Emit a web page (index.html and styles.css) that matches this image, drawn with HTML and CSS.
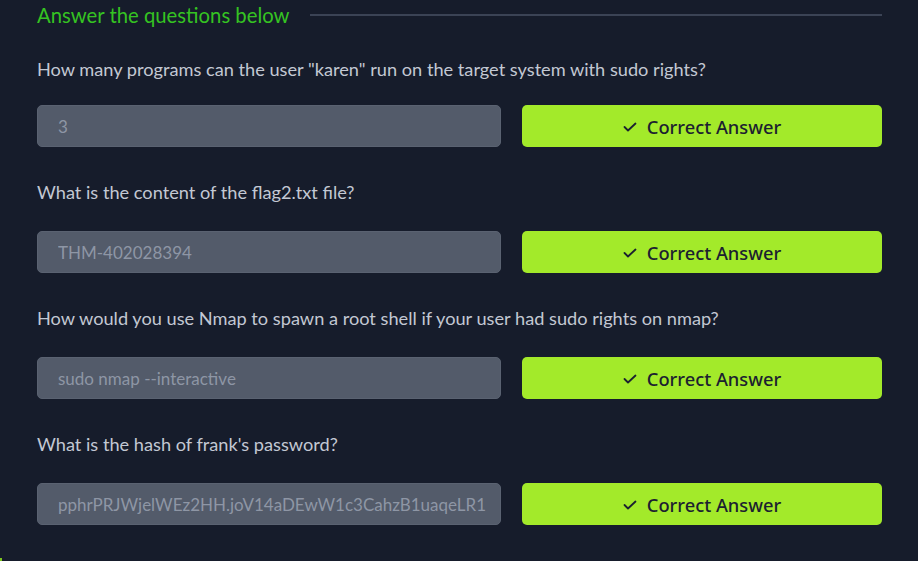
FILE: index.html
```html
<!DOCTYPE html>
<html>
<head>
<meta charset="utf-8">
<link rel="stylesheet" href="styles.css">
</head>
<body>
<div class="page">
  <div class="heading">
    <h2 class="heading-title">Answer the questions below</h2>
    <div class="heading-rule"></div>
  </div>

  <div class="question">
    <p class="question-text">How many programs can the user "karen" run on the target system with sudo rights?</p>
    <div class="answer-row">
      <div class="answer-input"><div class="answer-value">3</div></div>
      <button class="answer-btn"><svg class="check" viewBox="0 0 14 10" width="14" height="10"><polyline points="1.5,5 5,8.5 12.5,1.5" fill="none" stroke="currentColor" stroke-width="1.8" stroke-linecap="round" stroke-linejoin="round"/></svg>Correct Answer</button>
    </div>
  </div>

  <div class="question">
    <p class="question-text">What is the content of the flag2.txt file?</p>
    <div class="answer-row">
      <div class="answer-input"><div class="answer-value">THM-402028394</div></div>
      <button class="answer-btn"><svg class="check" viewBox="0 0 14 10" width="14" height="10"><polyline points="1.5,5 5,8.5 12.5,1.5" fill="none" stroke="currentColor" stroke-width="1.8" stroke-linecap="round" stroke-linejoin="round"/></svg>Correct Answer</button>
    </div>
  </div>

  <div class="question">
    <p class="question-text">How would you use Nmap to spawn a root shell if your user had sudo rights on nmap?</p>
    <div class="answer-row">
      <div class="answer-input"><div class="answer-value">sudo nmap --interactive</div></div>
      <button class="answer-btn"><svg class="check" viewBox="0 0 14 10" width="14" height="10"><polyline points="1.5,5 5,8.5 12.5,1.5" fill="none" stroke="currentColor" stroke-width="1.8" stroke-linecap="round" stroke-linejoin="round"/></svg>Correct Answer</button>
    </div>
  </div>

  <div class="question">
    <p class="question-text">What is the hash of frank's password?</p>
    <div class="answer-row">
      <div class="answer-input"><div class="answer-value answer-value-end"><span>$6$2.sUUDsOLIpXKxcr$eImtgFExyr2ls4jsghdD3DHLHHP9X50Iv.jNmwo/BJpphrPRJWjelWEz2HH.joV14aDEwW1c3CahzB1uaqeLR1</span></div></div>
      <button class="answer-btn"><svg class="check" viewBox="0 0 14 10" width="14" height="10"><polyline points="1.5,5 5,8.5 12.5,1.5" fill="none" stroke="currentColor" stroke-width="1.8" stroke-linecap="round" stroke-linejoin="round"/></svg>Correct Answer</button>
    </div>
  </div>
</div>
<div class="corner-mark"></div>
</body>
</html>
```

FILE: styles.css
```css
html, body {
  margin: 0;
  padding: 0;
  background: #161c2b;
  height: 100%;
  overflow: hidden;
}

body {
  font-family: "Lato", "Noto Sans", sans-serif;
  position: relative;
}

.page {
  width: 845px;
  padding-left: 37px;
  padding-top: 1px;
}

.heading {
  display: flex;
  align-items: center;
  gap: 20px;
  height: 28px;
}

.heading-title {
  margin: 0;
  font-weight: 400;
  font-size: 20.3px;
  color: #35c322;
  white-space: nowrap;
  line-height: 28px;
}

.heading-rule {
  flex: 1;
  height: 2px;
  background: #3b4355;
  margin-top: -1px;
}

.question {
  margin-top: 28px;
}

.question + .question {
  margin-top: 33px;
}

.question-text {
  margin: 0;
  font-size: 18.2px;
  line-height: 24px;
  color: #c3c8d3;
}

.answer-row {
  display: flex;
  gap: 21px;
  margin-top: 27px;
}

.heading + .question .answer-row {
  margin-top: 24px;
}

.answer-input {
  box-sizing: border-box;
  width: 464px;
  height: 42px;
  background: #535b6a;
  border: 1px solid #5a6271;
  border-radius: 5px;
  padding: 0 14px 0 20px;
  display: flex;
  align-items: center;
}

.answer-value {
  flex: 1;
  overflow: hidden;
  white-space: nowrap;
  font-size: 17px;
  color: #8e96a5;
  display: flex;
}

.answer-value-end {
  justify-content: flex-end;
}

.answer-btn {
  width: 360px;
  height: 42px;
  background: #a3ea2a;
  border: none;
  border-radius: 5px;
  display: flex;
  align-items: center;
  justify-content: center;
  gap: 10px;
  font-family: "Noto Sans", sans-serif;
  font-size: 18.3px;
  font-weight: 500;
  color: #1b2130;
  padding: 0;
}

.check {
  display: block;
  margin-top: 1px;
}

.corner-mark {
  position: absolute;
  left: 0;
  bottom: 0;
  width: 2px;
  height: 3px;
  background: #7dc51f;
}
```
